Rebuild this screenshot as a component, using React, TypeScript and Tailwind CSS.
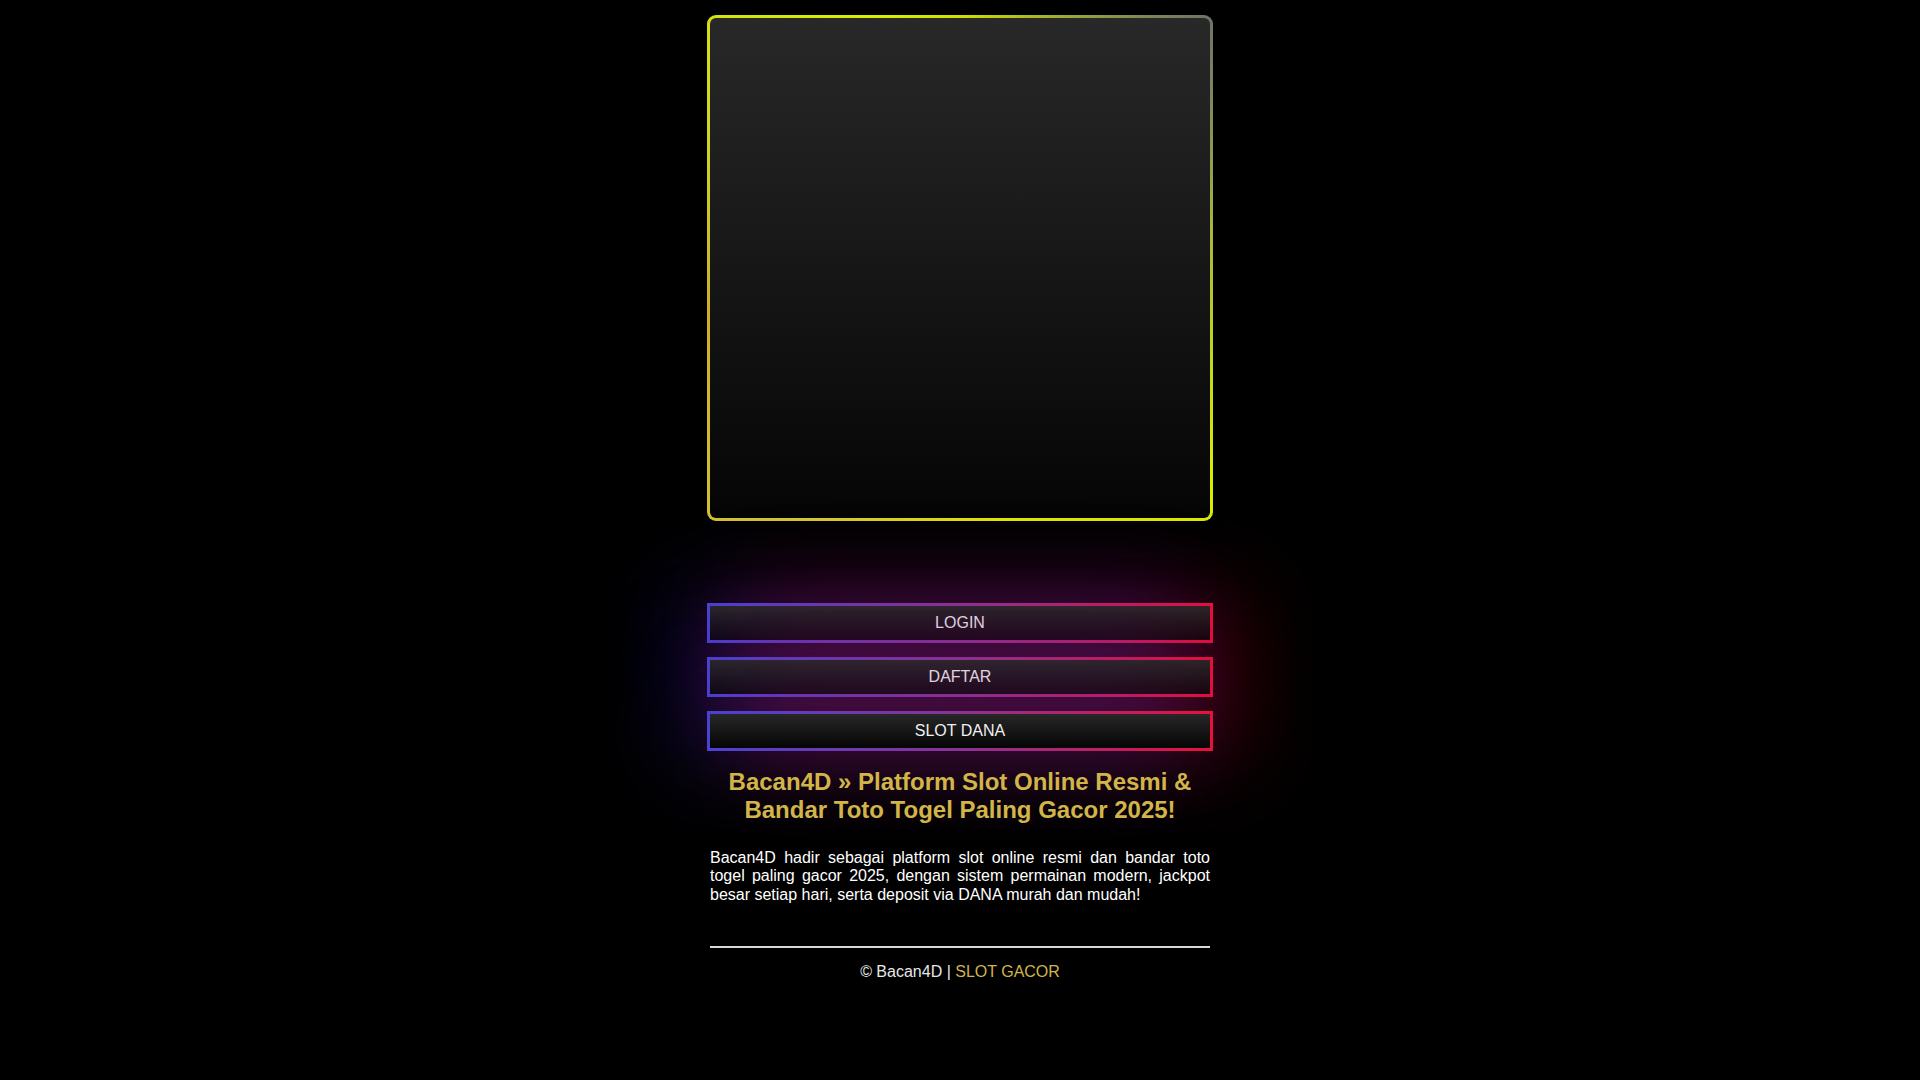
const buttons = ["LOGIN", "DAFTAR", "SLOT DANA"];

export default function App() {
  return (
    <div className="min-h-screen bg-black font-['Liberation_Sans',Arial,sans-serif] text-white">
      <div className="mx-auto w-[506px] pt-[15px]">
        {/* banner frame */}
        <div className="rounded-[9px] p-[3px] bg-[conic-gradient(from_0deg_at_50%_50%,#cfe000_0deg,#6c7468_45deg,#a8b440_80deg,#d8ec00_130deg,#e0e800_170deg,#d8c830_210deg,#cbb028_260deg,#d0d820_300deg,#d8f000_340deg,#cfe000_360deg)]">
          <div className="aspect-square w-full rounded-[6px] bg-[linear-gradient(to_bottom,#282828,#050505)]" />
        </div>

        {/* buttons */}
        <div className="mt-[82px] flex flex-col gap-[14px]">
          {buttons.map((b) => (
            <a
              key={b}
              href="#"
              className="block p-[3px] bg-[linear-gradient(to_right,#4a42d2,#8a3494_50%,#e8103c)] shadow-[-30px_0_90px_rgba(70,50,220,0.42),30px_0_90px_rgba(230,10,50,0.42)]"
            >
              <div className="flex h-[34px] items-center justify-center bg-[linear-gradient(to_bottom,#272727,#050505)] text-[16px] text-[#f0f0f0]">
                {b}
              </div>
            </a>
          ))}
        </div>

        {/* content */}
        <div className="px-[3px]">
          <h1 className="mt-[17px] text-center text-[24px] font-bold leading-[28px] text-[#d2b548]">
            Bacan4D » Platform Slot Online Resmi &amp; Bandar Toto Togel Paling Gacor 2025!
          </h1>
          <p className="mt-[25px] text-justify text-[16px] leading-[18.4px] text-white">
            Bacan4D hadir sebagai platform slot online resmi dan bandar toto togel paling gacor 2025, dengan sistem permainan modern, jackpot besar setiap hari, serta deposit via DANA murah dan mudah!
          </p>
          <hr className="mt-[42px] border-t-2 border-[#d8d8d8]" />
          <p className="mt-[12px] text-center text-[16px] text-[#e8e8e8]">
            © Bacan4D | <a href="#" className="text-[#d2b548]">SLOT GACOR</a>
          </p>
        </div>
      </div>
    </div>
  );
}
